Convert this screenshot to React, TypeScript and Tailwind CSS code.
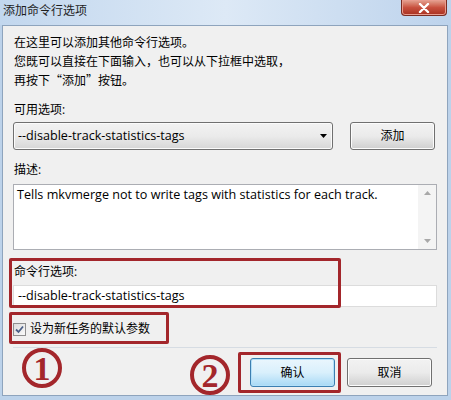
import React from 'react';

const font = { fontFamily: '"Open Sans", "Noto Sans CJK SC", sans-serif' };
const cjk = { fontFamily: '"Noto Sans CJK SC", sans-serif' };

function WinButton({ label, primary }: { label: string; primary?: boolean }) {
  return (
    <div
      className={
        'flex h-[29px] w-[85px] items-center justify-center rounded-[3px] border text-[12px] text-black ' +
        (primary
          ? 'border-[#3c7fb1] bg-gradient-to-b from-[#eaf6fd] via-[#d9f0fc] to-[#a7d9f5] shadow-[inset_0_0_0_1px_#b4e0f8]'
          : 'border-[#707070] bg-gradient-to-b from-[#f2f2f2] via-[#ebebeb] to-[#cfcfcf] shadow-[inset_0_0_0_1px_#fcfcfc]')
      }
    >
      {label}
    </div>
  );
}

export default function App() {
  return (
    <div
      className="relative flex h-[400px] w-[451px] flex-col overflow-hidden bg-[#bcd2ea] text-[12px] text-black"
      style={font}
    >
      {/* Title bar */}
      <div className="flex h-[25px] items-start bg-gradient-to-r from-[#c2d7ee] via-[#dde9f6] to-[#bdd3ec]">
        <span className="ml-[3px] mt-[3px] leading-[16px] text-[#1e1e1e]">添加命令行选项</span>
        <div className="ml-auto mr-[4px] flex h-[16px] w-[46px] items-center justify-center rounded-b-[4px] border border-t-0 border-[#7a2c22] bg-gradient-to-b from-[#e3a494] via-[#c8503f] to-[#a8301f] shadow-[inset_0_0_0_1px_#e89c8f]">
          <svg width="12" height="10" viewBox="0 0 12 10">
            <path d="M2 1 L10 9 M10 1 L2 9" stroke="#ffffff" strokeWidth="2.4" strokeLinecap="round" />
          </svg>
        </div>
      </div>

      {/* Content panel */}
      <div className="mb-[4px] ml-[2px] mr-[3px] flex-1 border border-[#8ea4bd] bg-[#f0f0f0]">
        <div className="px-[10px] pt-[8px]">
          <div className="pl-px leading-[18.5px]">
            <div>在这里可以添加其他命令行选项。</div>
            <div>您既可以直接在下面输入，也可以从下拉框中选取，</div>
            <div style={cjk}>再按下“添加”按钮。</div>
          </div>

          <div className="mt-[11.5px] pl-px leading-[18.5px]">可用选项:</div>

          <div className="mt-[2.5px] flex">
            <div className="flex h-[28px] w-[320px] items-center rounded-[3px] border border-[#707070] bg-gradient-to-b from-[#f2f2f2] via-[#ebebeb] to-[#d6d6d6] pl-[4px] pr-[5px] shadow-[inset_0_0_0_1px_#fbfbfb]">
              <span className="text-[12.6px]">--disable-track-statistics-tags</span>
              <svg className="ml-auto" width="7" height="4" viewBox="0 0 7 4">
                <path d="M0 0 H7 L3.5 4 Z" fill="#000000" />
              </svg>
            </div>
            <div className="ml-[17px]">
              <div className="flex h-[28px] w-[85px] items-center justify-center rounded-[3px] border border-[#707070] bg-gradient-to-b from-[#f2f2f2] via-[#ebebeb] to-[#cfcfcf] shadow-[inset_0_0_0_1px_#fcfcfc]">
                添加
              </div>
            </div>
          </div>

          <div className="mt-[11px] pl-px leading-[18.5px]">描述:</div>

          <div className="mt-[4.5px] flex h-[66px] border border-[#abadb3] bg-white">
            <div className="flex-1 pl-[3px] pt-[1px] text-[12.6px] leading-[18px]">
              Tells mkvmerge not to write tags with statistics for each track.
            </div>
            <div className="flex w-[18px] flex-col items-center justify-between bg-[#f4f4f4] py-[6px]">
              <svg width="7" height="4" viewBox="0 0 7 4">
                <path d="M0 4 H7 L3.5 0 Z" fill="#a8a8a8" />
              </svg>
              <svg width="7" height="4" viewBox="0 0 7 4">
                <path d="M0 0 H7 L3.5 4 Z" fill="#a8a8a8" />
              </svg>
            </div>
          </div>

          <div className="mt-[13px] pl-px leading-[18.5px]">命令行选项:</div>

          <div className="mt-[3.5px] flex h-[22px] items-center border border-[#dcdcdc] bg-white pl-[4px] text-[12.6px]">
            --disable-track-statistics-tags
          </div>

          <div className="mt-[13px] flex h-[18px] items-center">
            <div className="flex h-[13px] w-[13px] items-center justify-center border border-[#8f8f8f] bg-gradient-to-br from-[#dcdcdc] to-[#fafafa]">
              <svg width="9" height="9" viewBox="0 0 9 9">
                <path d="M1 4.5 L3.5 7 L8 1.5" stroke="#4a5f87" strokeWidth="1.8" fill="none" />
              </svg>
            </div>
            <span className="ml-[4px]">设为新任务的默认参数</span>
          </div>

          <div className="mt-[9px] h-px bg-[#d6dce3]" />

          <div className="mt-[10px] flex justify-end gap-[12px] pr-[5px]">
            <WinButton label="确认" primary />
            <WinButton label="取消" />
          </div>
        </div>
      </div>

      {/* Annotations */}
      <div className="absolute left-[9px] top-[258px] h-[50px] w-[332px] rounded-[2px] border-[3px] border-[#a3262b]" />
      <div className="absolute left-[9px] top-[312px] h-[32px] w-[160px] rounded-[2px] border-[3px] border-[#a3262b]" />
      <div className="absolute left-[238px] top-[352px] h-[41px] w-[103px] rounded-[2px] border-[3px] border-[#a3262b]" />
      <div
        className="absolute left-[22px] top-[348px] flex h-[40px] w-[40px] items-center justify-center rounded-full border-[4px] border-[#a3262b] pt-[2px] text-[34px] font-bold leading-none text-[#a3262b]"
        style={{ fontFamily: '"Liberation Serif", serif' }}
      >
        1
      </div>
      <div
        className="absolute left-[190px] top-[355px] flex h-[40px] w-[40px] items-center justify-center rounded-full border-[4px] border-[#a3262b] pt-[2px] text-[34px] font-bold leading-none text-[#a3262b]"
        style={{ fontFamily: '"Liberation Serif", serif' }}
      >
        2
      </div>
    </div>
  );
}
